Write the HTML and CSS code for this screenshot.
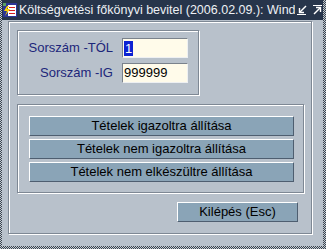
FILE: index.html
```html
<!DOCTYPE html>
<html>
<head>
<meta charset="utf-8">
<link rel="stylesheet" href="styles.css">
</head>
<body>
<div class="window">
  <div class="titlebar">
    <svg class="appicon" width="14" height="14" viewBox="0 0 14 14">
      <rect x="0" y="0" width="14" height="14" fill="#2b3596"/>
      <rect x="0" y="0" width="3" height="3" fill="#5aa060"/>
      <rect x="5" y="2" width="8" height="11" fill="#ffffff"/>
      <rect x="6" y="4" width="6" height="1" fill="#d42020"/>
      <rect x="6" y="7" width="6" height="1" fill="#d42020"/>
      <rect x="6" y="10" width="6" height="1" fill="#d42020"/>
      <polygon points="4,3 1,8 4,8 2,13 7,6 4,6 6,3" fill="#ffd400"/>
    </svg>
    <div class="title">Költségvetési főkönyvi bevitel (2006.02.09.): Windows</div>
    <div class="tbtns">
      <svg width="10" height="10" viewBox="0 0 10 10">
        <path d="M9 1 L3 7" stroke="#fff" stroke-width="1.4" fill="none"/>
        <path d="M2.5 3 V7.5 H7" stroke="#fff" stroke-width="1.4" fill="none"/>
        <path d="M0 9.5 H9" stroke="#fff" stroke-width="1" fill="none"/>
      </svg>
      <svg width="10" height="10" viewBox="0 0 10 10">
        <path d="M0 0.5 H9" stroke="#fff" stroke-width="1" fill="none"/>
        <path d="M1 9 L7 3" stroke="#fff" stroke-width="1.4" fill="none"/>
        <path d="M3 2.5 H7.5 V7" stroke="#fff" stroke-width="1.4" fill="none"/>
      </svg>
    </div>
  </div>
  <div class="client">
    <div class="frame">
      <div class="group range">
        <div class="lbl">Sorszám -TÓL</div>
        <div class="input"><span class="sel">1</span></div>
        <div class="lbl">Sorszám -IG</div>
        <div class="input">999999</div>
      </div>
      <div class="group actions">
        <div class="btn">Tételek igazoltra állítása</div>
        <div class="btn">Tételek nem igazoltra állítása</div>
        <div class="btn">Tételek nem elkészültre állítása</div>
      </div>
      <div class="footer">
        <div class="btn exit">Kilépés (Esc)</div>
      </div>
    </div>
  </div>
</div>
</body>
</html>
```

FILE: styles.css
```css
* { box-sizing: border-box; }
html, body { margin: 0; padding: 0; }
body {
  width: 326px;
  height: 249px;
  overflow: hidden;
  background: repeating-conic-gradient(#3a434e 0 25%, #c2cad2 0 50%) 0 0 / 2px 2px;
  font-family: "Liberation Sans", Arial, sans-serif;
}
.window {
  margin: 0 3px 0 2px;
  height: 246px;
  display: flex;
  flex-direction: column;
  background: #b8c1cb;
}
.titlebar {
  height: 20px;
  flex: none;
  background: #27354b;
  display: flex;
  align-items: center;
  color: #eef1f5;
}
.appicon { flex: none; margin: 0 2px 0 1px; }
.title {
  flex: 1;
  min-width: 0;
  overflow: hidden;
  white-space: nowrap;
  font-size: 12.5px;
  line-height: 20px;
}
.tbtns {
  flex: none;
  display: flex;
  gap: 6px;
  margin-left: 2px;
}
.tbtns svg { display: block; }
.client {
  flex: 1;
  padding: 1px 0 0 6px;
}
.frame {
  width: 304px;
  height: 213px;
  border: 1px solid #7e8894;
  box-shadow: inset 1px 1px 0 #fff, 1px 1px 0 #fff;
  padding: 8px 0 0 8px;
}
.group {
  border: 1px solid #7e8894;
  box-shadow: inset 1px 1px 0 #fff, 1px 1px 0 #fff;
}
.range {
  width: 182px;
  height: 65px;
  display: grid;
  grid-template-columns: 95px 66px;
  grid-auto-rows: 20px;
  column-gap: 9px;
  row-gap: 5px;
  padding-top: 7px;
}
.lbl {
  color: #1c267a;
  font-size: 13px;
  line-height: 20px;
  text-align: right;
}
.input {
  background: #fffbea;
  border: 1px solid;
  border-color: #7a828c #eef0f2 #eef0f2 #7a828c;
  font-size: 13px;
  line-height: 18px;
  padding-left: 1px;
  color: #000;
}
.sel {
  display: inline-block;
  background: #0c22d2;
  color: #fff;
  line-height: 15px;
  height: 15px;
  padding: 0 1px;
  vertical-align: top;
  margin-top: 2px;
}
.actions {
  margin-top: 9px;
  width: 287px;
  height: 89px;
  padding: 11px 0 0 11px;
  display: flex;
  flex-direction: column;
  gap: 3px;
}
.btn {
  background: #8aa4b7;
  border: 1px solid;
  border-color: #fff #4e5e70 #4e5e70 #fff;
  font-size: 13px;
  line-height: 18px;
  height: 20px;
  text-align: center;
  color: #000;
  width: 265px;
}
.footer {
  display: flex;
  justify-content: flex-end;
  margin-top: 9px;
  padding-right: 13px;
}
.exit { width: 121px; }
```
